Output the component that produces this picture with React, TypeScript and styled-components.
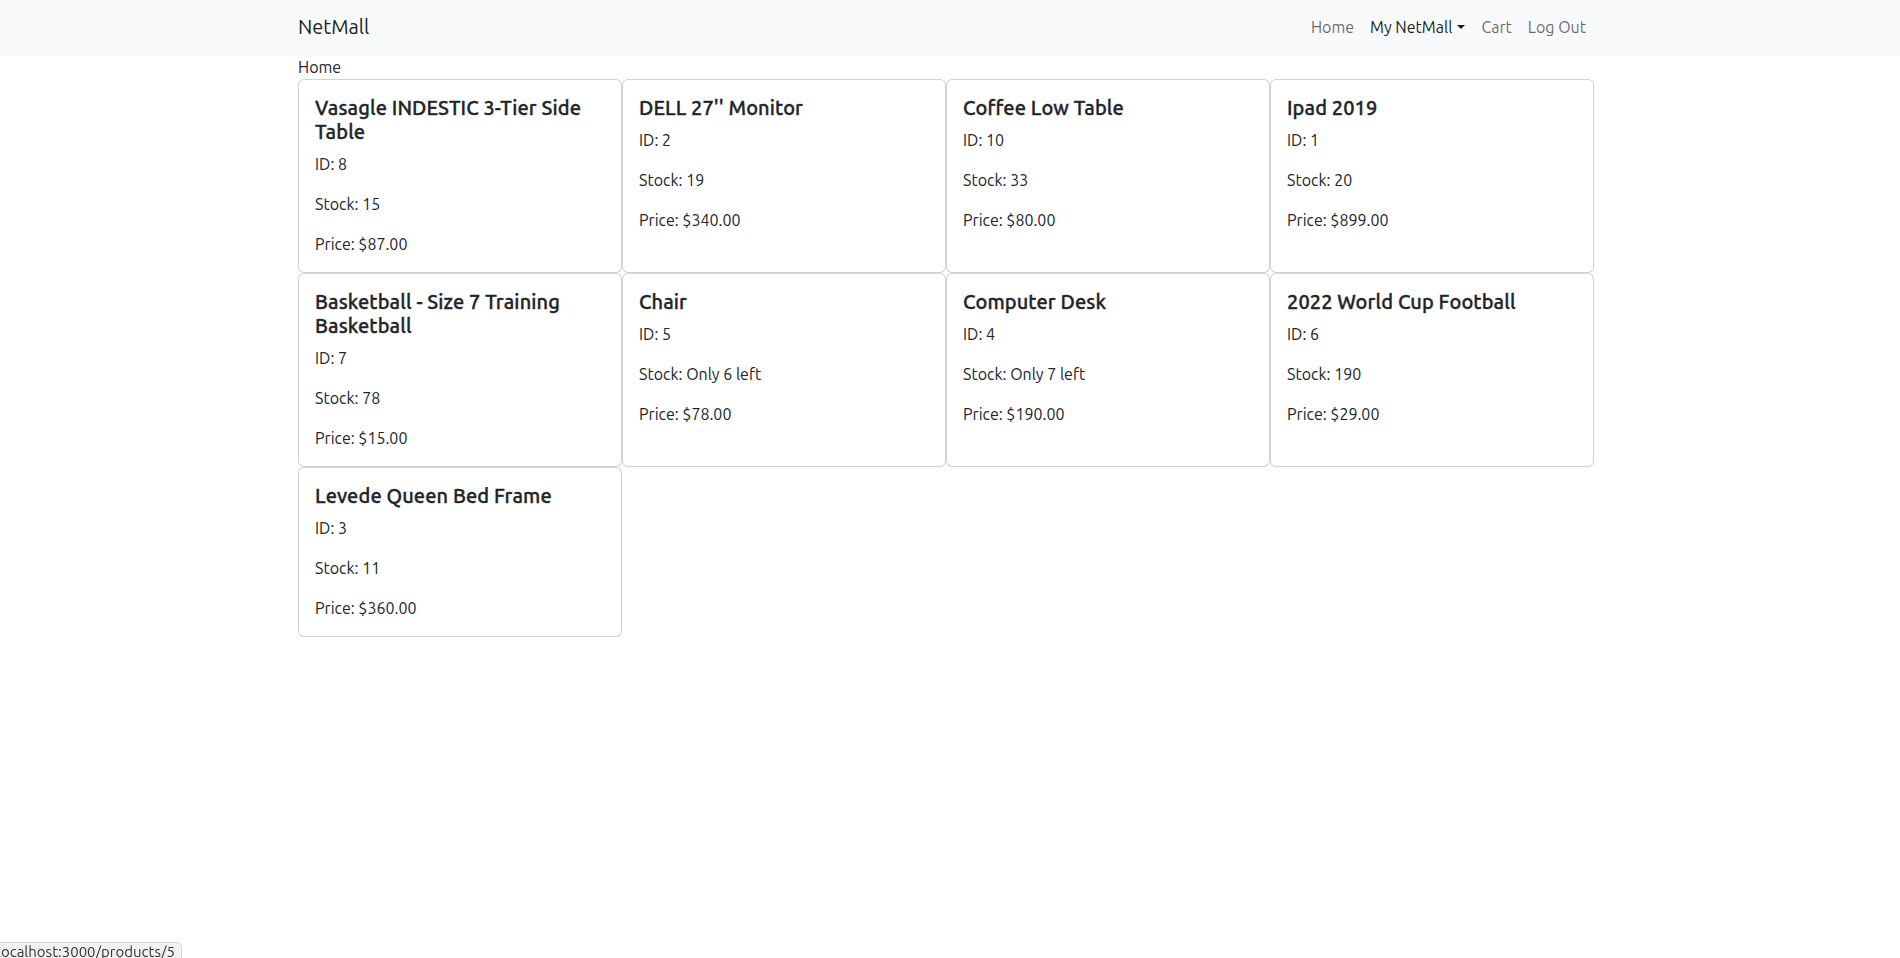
import React from "react";
import styled, { createGlobalStyle } from "styled-components";

const GlobalStyle = createGlobalStyle`
  html, body {
    margin: 0;
    padding: 0;
    background: #ffffff;
    color: #212529;
    font-family: "Ubuntu", "Lato", "Noto Sans", sans-serif;
    font-size: 16px;
    line-height: 1.5;
  }
  * { box-sizing: border-box; }
`;

const Page = styled.div`
  padding-right: 8px;
  min-height: 958px;
`;

const NavBar = styled.nav`
  background: #f8f9fa;
  margin-right: -8px;
  padding-right: 8px;
`;

const Container = styled.div`
  max-width: 1320px;
  margin: 0 auto;
  padding: 0 12px;
`;

const NavInner = styled(Container)`
  display: flex;
  align-items: center;
  justify-content: space-between;
  height: 55px;
  padding-bottom: 2px;
`;

const Brand = styled.a`
  font-size: 20px;
  line-height: 30px;
  color: rgba(0, 0, 0, 0.9);
  text-decoration: none;
`;

const NavList = styled.ul`
  display: flex;
  list-style: none;
  margin: 0;
  padding: 0;
`;

const NavLink = styled.a<{ $active?: boolean }>`
  display: block;
  padding: 8px;
  font-size: 16px;
  line-height: 24px;
  text-decoration: none;
  color: ${(p) => (p.$active ? "rgba(0, 0, 0, 0.9)" : "rgba(0, 0, 0, 0.6)")};
`;

const Caret = styled.span`
  display: inline-block;
  margin-left: 5px;
  vertical-align: 4px;
  border-top: 4.8px solid;
  border-right: 4.8px solid transparent;
  border-left: 4.8px solid transparent;
`;

const Crumb = styled.div`
  font-size: 16px;
  line-height: 24px;
`;

const Grid = styled.div`
  display: grid;
  grid-template-columns: repeat(4, 324px);
`;

const Card = styled.div`
  border: 1px solid rgba(0, 0, 0, 0.175);
  border-radius: 6px;
  background: #fff;
  padding: 16px;
  margin-right: 0.5px;
`;

const Title = styled.h5`
  margin: 0 0 8px;
  font-family: "Ubuntu Medium", "Ubuntu", "Lato", sans-serif;
  font-size: 20px;
  font-weight: 500;
  line-height: 24px;
  letter-spacing: 0.1px;
  -webkit-text-stroke: 0.35px #212529;
`;

const Text = styled.p`
  margin: 0 0 16px;
  font-size: 16px;
  line-height: 24px;
  &:last-child {
    margin-bottom: 0;
  }
`;

const Status = styled.div`
  position: fixed;
  left: -5px;
  bottom: -10px;
  padding: 0 6px 6px 1px;
  background: #f1f1f1;
  border: 1px solid #d6d6d6;
  border-top-right-radius: 5px;
  font-size: 15px;
  line-height: 18px;
  color: #333;
`;

const products = [
  { name: "Vasagle INDESTIC 3-Tier Side Table", id: 8, stock: "15", price: "87.00" },
  { name: "DELL 27'' Monitor", id: 2, stock: "19", price: "340.00" },
  { name: "Coffee Low Table", id: 10, stock: "33", price: "80.00" },
  { name: "Ipad 2019", id: 1, stock: "20", price: "899.00" },
  { name: "Basketball - Size 7 Training Basketball", id: 7, stock: "78", price: "15.00" },
  { name: "Chair", id: 5, stock: "Only 6 left", price: "78.00" },
  { name: "Computer Desk", id: 4, stock: "Only 7 left", price: "190.00" },
  { name: "2022 World Cup Football", id: 6, stock: "190", price: "29.00" },
  { name: "Levede Queen Bed Frame", id: 3, stock: "11", price: "360.00" },
];

export default function App() {
  return (
    <Page>
      <GlobalStyle />
      <NavBar>
        <NavInner>
          <Brand href="#">NetMall</Brand>
          <NavList>
            <li><NavLink href="#">Home</NavLink></li>
            <li>
              <NavLink href="#" $active>
                My NetMall<Caret />
              </NavLink>
            </li>
            <li><NavLink href="#">Cart</NavLink></li>
            <li><NavLink href="#">Log Out</NavLink></li>
          </NavList>
        </NavInner>
      </NavBar>
      <Container>
        <Crumb>Home</Crumb>
        <Grid>
          {products.map((p) => (
            <Card key={p.id}>
              <Title>{p.name}</Title>
              <Text>ID: {p.id}</Text>
              <Text>Stock: {p.stock}</Text>
              <Text>Price: ${p.price}</Text>
            </Card>
          ))}
        </Grid>
      </Container>
      <Status>localhost:3000/products/5</Status>
    </Page>
  );
}
